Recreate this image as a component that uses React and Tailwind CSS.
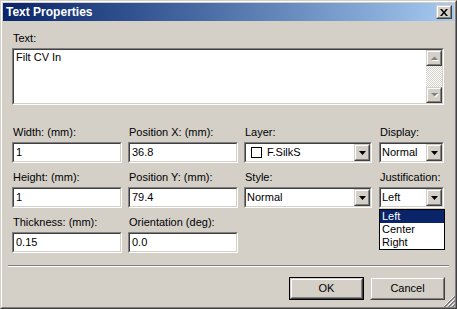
import React from 'react';

const sunkenOuter = "border border-t-[#808080] border-l-[#808080] border-r-white border-b-white";
const sunkenInner = "border border-t-[#404040] border-l-[#404040] border-r-[#d4d0c8] border-b-[#d4d0c8]";
const raisedOuter = "border border-t-[#d4d0c8] border-l-[#d4d0c8] border-r-[#404040] border-b-[#404040]";
const raisedInner = "border border-t-white border-l-white border-r-[#808080] border-b-[#808080]";

function Sunken({ className = "", children }) {
    return (
        <div className={`${sunkenOuter} ${className}`}>
            <div className={`${sunkenInner} h-full bg-white flex`}>{children}</div>
        </div>
    );
}

function Raised({ className = "", children }) {
    return (
        <div className={`${raisedOuter} ${className}`}>
            <div className={`${raisedInner} h-full w-full bg-[#d4d0c8] flex items-center justify-center`}>{children}</div>
        </div>
    );
}

function DownArrow() {
    return (
        <svg width="7" height="4" viewBox="0 0 7 4">
            <path d="M0 0h7L3.5 4z" fill="#000" />
        </svg>
    );
}

function GreyArrow({ up }) {
    return (
        <svg width="9" height="6" viewBox="0 0 9 6">
            {up ? (
                <>
                    <path d="M1 5h7L4.5 1.5z" fill="#fff" transform="translate(1 1)" />
                    <path d="M1 5h7L4.5 1.5z" fill="#808080" />
                </>
            ) : (
                <>
                    <path d="M1 1h7L4.5 4.5z" fill="#fff" transform="translate(1 1)" />
                    <path d="M1 1h7L4.5 4.5z" fill="#808080" />
                </>
            )}
        </svg>
    );
}

function TextInput({ value }) {
    return (
        <Sunken className="h-[21px]">
            <span className="pl-[2px] leading-[17px]">{value}</span>
        </Sunken>
    );
}

function Combo({ children }) {
    return (
        <Sunken className="h-[21px]">
            <div className="flex-1 flex items-center leading-[17px]">{children}</div>
            <Raised className="w-[16px] h-full">
                <DownArrow />
            </Raised>
        </Sunken>
    );
}

function Field({ label, children }) {
    return (
        <div className="flex flex-col">
            <div className="h-[13px] leading-[13px] pl-px whitespace-nowrap">{label}</div>
            <div className="mt-[3px]">{children}</div>
        </div>
    );
}

function Button({ label, isDefault }) {
    return (
        <div className={`w-[75px] h-[23px] ${isDefault ? "border border-black" : ""}`}>
            <Raised className="w-full h-full">
                <span>{label}</span>
            </Raised>
        </div>
    );
}

export default function App() {
    return (
        <div className="w-[457px] h-[309px] bg-[#d4d0c8] font-['Liberation_Sans',Arial,sans-serif] text-[11px] text-black">
            <div className={`${raisedOuter} h-full`}>
                <div className={`${raisedInner} h-full p-px flex flex-col relative`}>
                    {/* title bar */}
                    <div className="h-[18px] flex items-center bg-gradient-to-r from-[#0a246a] to-[#a6caf0] pl-[3px] pr-[2px]">
                        <span className="text-white font-bold text-[12px]">Text Properties</span>
                        <div className="ml-auto w-[16px] h-[14px]">
                            <Raised className="w-full h-full">
                                <svg width="8" height="7" viewBox="0 0 8 7">
                                    <path d="M0 0h2l2 2.5L6 0h2L5 3.5 8 7H6L4 4.5 2 7H0l3-3.5z" fill="#000" />
                                </svg>
                            </Raised>
                        </div>
                    </div>

                    <div className="pl-[9px] pr-[10px] flex flex-col">
                        <div className="mt-[11px] h-[13px] leading-[13px] pl-px">Text:</div>
                        <Sunken className="mt-[3px] h-[57px] w-[432px]">
                            <div className="flex-1 pl-[2px] pt-px leading-[13px]">Filt CV In</div>
                            <div className="w-[16px] flex flex-col">
                                <Raised className="h-[16px]">
                                    <GreyArrow up />
                                </Raised>
                                <div className="flex-1 bg-[repeating-conic-gradient(#ffffff_0_25%,#d4d0c8_0_50%)] bg-[length:2px_2px]" />
                                <Raised className="h-[16px]">
                                    <GreyArrow />
                                </Raised>
                            </div>
                        </Sunken>

                        <div className="mt-[21px] grid grid-cols-[110px_110px_128px_66px] gap-x-[6px] gap-y-[8px]">
                            <Field label="Width: (mm):"><TextInput value="1" /></Field>
                            <Field label="Position X: (mm):"><TextInput value="36.8" /></Field>
                            <Field label="Layer:">
                                <Combo>
                                    <span className="ml-[5px] w-[11px] h-[11px] border border-black bg-white" />
                                    <span className="ml-[5px]">F.SilkS</span>
                                </Combo>
                            </Field>
                            <div className="pl-px">
                                <Field label="Display:">
                                    <Combo><span className="pl-px">Normal</span></Combo>
                                </Field>
                            </div>

                            <Field label="Height: (mm):"><TextInput value="1" /></Field>
                            <Field label="Position Y: (mm):"><TextInput value="79.4" /></Field>
                            <Field label="Style:">
                                <Combo><span className="pl-px">Normal</span></Combo>
                            </Field>
                            <div className="pl-px relative">
                                <Field label="Justification:">
                                    <Combo><span className="pl-px">Left</span></Combo>
                                </Field>
                                <div className="absolute left-px top-[38px] w-[66px] border border-black bg-white flex flex-col leading-[13px] z-10">
                                    <div className="bg-[#0a246a] text-white pl-[2px] h-[13px]">Left</div>
                                    <div className="pl-[2px] h-[13px]">Center</div>
                                    <div className="pl-[2px] h-[13px]">Right</div>
                                </div>
                            </div>

                            <Field label="Thickness: (mm):"><TextInput value="0.15" /></Field>
                            <Field label="Orientation (deg):"><TextInput value="0.0" /></Field>
                        </div>
                    </div>

                    <div className="mt-[12px] mx-[5px] h-[2px] border-t border-t-[#808080] border-b border-b-white" />

                    <div className="mt-[10px] flex justify-end gap-[6px] pr-[9px]">
                        <Button label="OK" isDefault />
                        <Button label="Cancel" />
                    </div>

                    <svg className="absolute right-0 bottom-0" width="12" height="12" viewBox="0 0 12 12">
                        <path d="M11 1L1 11M11 5L5 11M11 9L9 11" stroke="#fff" strokeWidth="1" />
                        <path d="M12 1L1 12M12 2L2 12M12 5L5 12M12 6L6 12M12 9L9 12M12 10L10 12" stroke="#808080" strokeWidth="1" />
                    </svg>
                </div>
            </div>
        </div>
    );
}
